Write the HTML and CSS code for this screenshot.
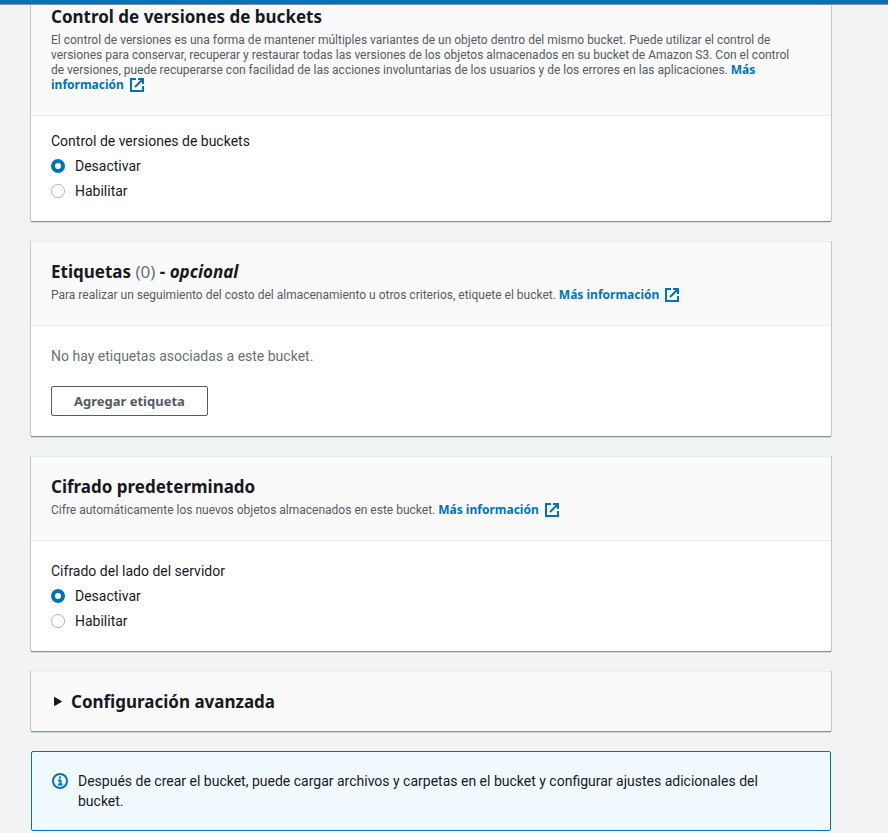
FILE: index.html
```html
<!DOCTYPE html>
<html lang="es">
<head>
<meta charset="utf-8">
<meta name="viewport" content="width=device-width, initial-scale=1">
<title>Crear bucket</title>
<link rel="stylesheet" href="styles.css">
</head>
<body>
<div class="topbar"></div>
<main class="page">
  <section class="card card-scrolled">
    <header class="card-header">
      <h2>Control de versiones de buckets</h2>
      <p class="description">El control de versiones es una forma de mantener múltiples variantes de un objeto dentro del mismo bucket. Puede utilizar el control de<br>versiones para conservar, recuperar y restaurar todas las versiones de los objetos almacenados en su bucket de Amazon S3. Con el control<br>de versiones, puede recuperarse con facilidad de las acciones involuntarias de los usuarios y de los errores en las aplicaciones. <a href="#">Más<br>información<svg class="external" viewBox="0 0 14 14" aria-hidden="true"><path d="M6 1H1v12h12V8M8 1h5v5M13 1 5 9"/></svg></a></p>
    </header>
    <fieldset class="card-body compact">
      <legend>Control de versiones de buckets</legend>
      <label class="option"><input type="radio" name="versiones" checked>Desactivar</label>
      <label class="option"><input type="radio" name="versiones">Habilitar</label>
    </fieldset>
  </section>

  <section class="card">
    <header class="card-header">
      <h2>Etiquetas <span class="count">(0)</span> - <em>opcional</em></h2>
      <p class="description">Para realizar un seguimiento del costo del almacenamiento u otros criterios, etiquete el bucket. <a href="#">Más información<svg class="external" viewBox="0 0 14 14" aria-hidden="true"><path d="M6 1H1v12h12V8M8 1h5v5M13 1 5 9"/></svg></a></p>
    </header>
    <div class="card-body">
      <p class="empty">No hay etiquetas asociadas a este bucket.</p>
      <button type="button" class="button">Agregar etiqueta</button>
    </div>
  </section>

  <section class="card">
    <header class="card-header">
      <h2>Cifrado predeterminado</h2>
      <p class="description">Cifre automáticamente los nuevos objetos almacenados en este bucket. <a href="#">Más información<svg class="external" viewBox="0 0 14 14" aria-hidden="true"><path d="M6 1H1v12h12V8M8 1h5v5M13 1 5 9"/></svg></a></p>
    </header>
    <fieldset class="card-body">
      <legend>Cifrado del lado del servidor</legend>
      <label class="option"><input type="radio" name="cifrado" checked>Desactivar</label>
      <label class="option"><input type="radio" name="cifrado">Habilitar</label>
    </fieldset>
  </section>

  <details class="card advanced">
    <summary><svg class="caret" viewBox="0 0 10 12" aria-hidden="true"><path d="M1.500 1.500v8l7-4z"/></svg><h2>Configuración avanzada</h2></summary>
  </details>

  <aside class="alert">
    <svg class="info" viewBox="0 0 16 16" aria-hidden="true"><circle cx="8" cy="8" r="7"/><path d="M7 4.500h2M6 7.500h2.500V12M6 11.500h4.500"/></svg>
    <p>Después de crear el bucket, puede cargar archivos y carpetas en el bucket y configurar ajustes adicionales del bucket.</p>
  </aside>
</main>
</body>
</html>
```
FILE: styles.css
```css
* {
  box-sizing: border-box;
}

body {
  margin: 0;
  background: #f2f3f3;
  color: #16191f;
  font: 14px/20px Roboto, "Noto Sans", sans-serif;
}

h2,
p {
  margin: 0;
}

.topbar {
  height: 5px;
  background: #0073bb;
  border-bottom: 1px solid #879196;
}

.page {
  display: flex;
  flex-direction: column;
  gap: 20px;
  padding: 0 57px 0 31px;
}

.card {
  background: #fff;
  border-top: 1px solid #eaeded;
  box-shadow: 0 1px 0 0 #879596, 0 2px 0 0 #d5dbdb, 1px 0 0 0 #c3c7c8, -1px 0 0 0 #c3c7c8;
}

.card-header {
  padding: 19px 20px 22px;
  background: #fafafa;
  border-bottom: 1px solid #eaeded;
}

.card-scrolled {
  border-top: 0;
}

.card-scrolled .card-header {
  padding-top: 1px;
}

h2 {
  font-family: "Noto Sans", sans-serif;
  font-size: 17px;
  line-height: 22px;
  font-weight: 700;
}

.count {
  color: #687078;
  font-weight: 400;
}

.description {
  margin-top: 5px;
  color: #545b64;
  font-size: 12px;
  line-height: 15px;
}

a {
  color: #0073bb;
  font-family: "Noto Sans", sans-serif;
  font-weight: 700;
  line-height: 12px;
  text-decoration: none;
}

.external {
  width: 14px;
  height: 14px;
  margin-left: 6px;
  vertical-align: -3px;
  fill: none;
  stroke: currentColor;
  stroke-width: 2;
}

.card-body {
  display: flow-root;
  margin: 0;
  padding: 20px;
  border: 0;
}

.compact {
  padding-top: 15px;
}

legend {
  float: left;
  width: 100%;
  padding: 0;
}

.option {
  display: flex;
  align-items: center;
  gap: 10px;
  clear: both;
  padding-top: 5px;
}

.option input {
  appearance: none;
  width: 14px;
  height: 14px;
  margin: 0;
  background: #fff;
  border: 1px solid #aab7b8;
  border-radius: 50%;
}

.option input:checked {
  border: 4px solid #0073bb;
}

.empty {
  color: #687078;
}

.button {
  display: block;
  height: 30px;
  margin-top: 20px;
  padding: 0 22px;
  background: #fff;
  border: 1px solid #545b64;
  border-radius: 2px;
  color: #545b64;
  font: 700 13px/20px "Noto Sans", sans-serif;
}

.advanced {
  background: #fafafa;
}

.advanced summary {
  display: flex;
  align-items: center;
  gap: 8px;
  padding: 19px 22px 18px;
  list-style: none;
}

.caret {
  width: 10px;
  height: 12px;
  fill: #16191f;
  stroke: #16191f;
  stroke-linejoin: round;
}

.alert {
  display: flex;
  gap: 10px;
  padding: 19px 50px 19px 20px;
  background: #f1faff;
  border: 1px solid #0073bb;
  border-radius: 2px;
}

.info {
  flex: none;
  width: 16px;
  height: 16px;
  margin-top: 2px;
  fill: none;
  stroke: #0073bb;
  stroke-width: 2;
}
```
